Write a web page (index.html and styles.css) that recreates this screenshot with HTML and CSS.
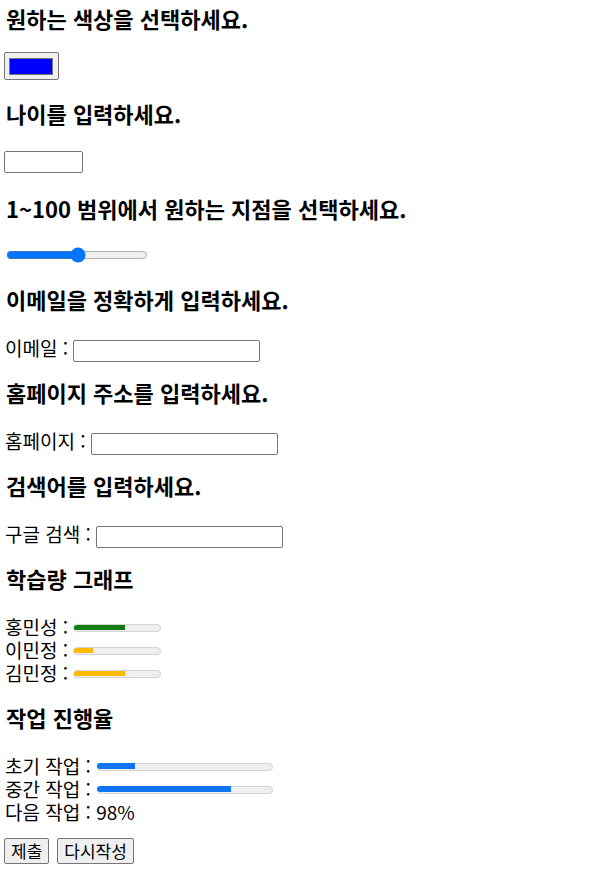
FILE: index.html
```html
<!DOCTYPE html>
<html lang="ko">
<head>
<meta charset="utf-8">
<title>입력 양식</title>
<link rel="stylesheet" href="styles.css">
</head>
<body>
<form class="page">
  <h3 class="q">원하는 색상을 선택하세요.</h3>
  <div class="row row-color"><input type="color" class="color" value="#0000ff"></div>

  <h3 class="q">나이를 입력하세요.</h3>
  <div class="row row-num"><input type="number" class="num"></div>

  <h3 class="q">1~100 범위에서 원하는 지점을 선택하세요.</h3>
  <div class="row row-range"><input type="range" class="range" min="1" max="100" value="51"></div>

  <h3 class="q">이메일을 정확하게 입력하세요.</h3>
  <div class="row">이메일 : <input type="email" class="text"></div>

  <h3 class="q">홈페이지 주소를 입력하세요.</h3>
  <div class="row">홈페이지 : <input type="url" class="text"></div>

  <h3 class="q">검색어를 입력하세요.</h3>
  <div class="row">구글 검색 : <input type="search" class="text"></div>

  <h3 class="q">학습량 그래프</h3>
  <div class="group">
    <div class="row">홍민성 : <meter class="meter" min="0" max="100" low="30" high="70" optimum="50" value="60"></meter></div>
    <div class="row">이민정 : <meter class="meter" min="0" max="100" low="30" high="70" optimum="50" value="23"></meter></div>
    <div class="row">김민정 : <meter class="meter" min="0" max="100" low="30" high="70" optimum="90" value="60"></meter></div>
  </div>

  <h3 class="q">작업 진행율</h3>
  <div class="group">
    <div class="row">초기 작업 : <progress class="prog" max="100" value="22"></progress></div>
    <div class="row">중간 작업 : <progress class="prog" max="100" value="77"></progress></div>
    <div class="row">다음 작업 : 98%</div>
  </div>

  <div class="buttons">
    <input type="submit" class="btn" value="제출">
    <input type="reset" class="btn" value="다시작성">
  </div>
</form>
</body>
</html>
```

FILE: styles.css
```css
html, body {
  margin: 0;
  padding: 0;
  background: #ffffff;
}

body {
  font-family: "Noto Sans CJK KR", "Noto Sans", sans-serif;
  font-size: 19px;
  color: #000000;
}

.page {
  padding: 7px 0 0 5px;
}

.q {
  font-size: 22px;
  font-weight: bold;
  line-height: 22px;
  height: 22px;
  padding: 0 0 4px 1px;
  margin: 22px 0 0 0;
  white-space: nowrap;
}

.page > .q:first-child {
  margin-top: 0;
}

.row {
  line-height: 23px;
  height: 23px;
  margin-top: 22px;
  white-space: nowrap;
}

.group .row {
  margin-top: 0;
}

.group {
  margin-top: 22px;
}

.row-color {
  height: 28px;
  margin-top: 19px;
}

.row-num {
  height: 24px;
  margin-top: 23px;
}

.row-range {
  margin-top: 20px;
}

input {
  font-family: inherit;
}

.color {
  -webkit-appearance: none;
  appearance: none;
  box-sizing: border-box;
  width: 55px;
  height: 28px;
  margin: 0 0 0 -1px;
  padding: 0;
  border: 1px solid #767676;
  border-radius: 2px;
  background: #efefef;
  vertical-align: top;
}

.color::-webkit-color-swatch-wrapper {
  padding: 5px 5px 4px 4px;
}

.color::-webkit-color-swatch {
  border: 1px solid #777777;
  border-radius: 0;
}

.num {
  box-sizing: border-box;
  width: 79px;
  height: 22px;
  margin: 0 0 0 -1px;
  border: 1px solid #767676;
  border-radius: 2px;
  padding: 1px 2px;
  vertical-align: top;
  font-size: 13px;
}

.range {
  width: 142px;
  margin: 0 0 6px 1px;
  vertical-align: middle;
}

.text {
  box-sizing: border-box;
  width: 187px;
  height: 22px;
  margin: 0 0 0 0;
  border: 1px solid #767676;
  border-radius: 2px;
  padding: 1px 2px;
  vertical-align: middle;
  font-size: 13px;
  -webkit-appearance: none;
  appearance: none;
  background: #ffffff;
}

.meter {
  -webkit-appearance: none;
  appearance: none;
  width: 88px;
  height: 8px;
  vertical-align: middle;
  margin: 5px 0 0 0;
}

.meter::-webkit-meter-inner-element {
  display: block;
}

.meter::-webkit-meter-bar {
  height: 8px;
  box-sizing: border-box;
  background: #efefef;
  border: 1px solid #d4d4d4;
  border-radius: 4px;
}

.meter::-webkit-meter-optimum-value {
  background: #107c10;
  border-radius: 4px 0 0 4px;
  height: 8px;
  margin-top: -1px;
  margin-left: -1px;
}

.meter::-webkit-meter-suboptimum-value {
  background: #ffb900;
  border-radius: 4px 0 0 4px;
  height: 8px;
  margin-top: -1px;
  margin-left: -1px;
}

.meter::-webkit-meter-even-less-good-value {
  background: #d83b01;
}

.prog {
  -webkit-appearance: none;
  appearance: none;
  width: 176px;
  height: 8px;
  vertical-align: middle;
  margin: 0 0 4px 1px;
  border: none;
}

.prog::-webkit-progress-bar {
  background: #efefef;
  border: 1px solid #d4d4d4;
  border-radius: 4px;
  box-sizing: border-box;
}

.prog::-webkit-progress-value {
  background: #0f74f4;
  border-radius: 4px 0 0 4px;
  margin: -1px;
  height: 8px;
}

.buttons {
  margin-top: 15px;
  display: flex;
  gap: 8px;
  margin-left: -1px;
}

.btn {
  box-sizing: border-box;
  height: 26px;
  padding: 0 6px;
  font-size: 17px;
  line-height: 24px;
  background: #efefef;
  border: 1px solid #767676;
  border-radius: 2px;
  color: #000000;
}
```
